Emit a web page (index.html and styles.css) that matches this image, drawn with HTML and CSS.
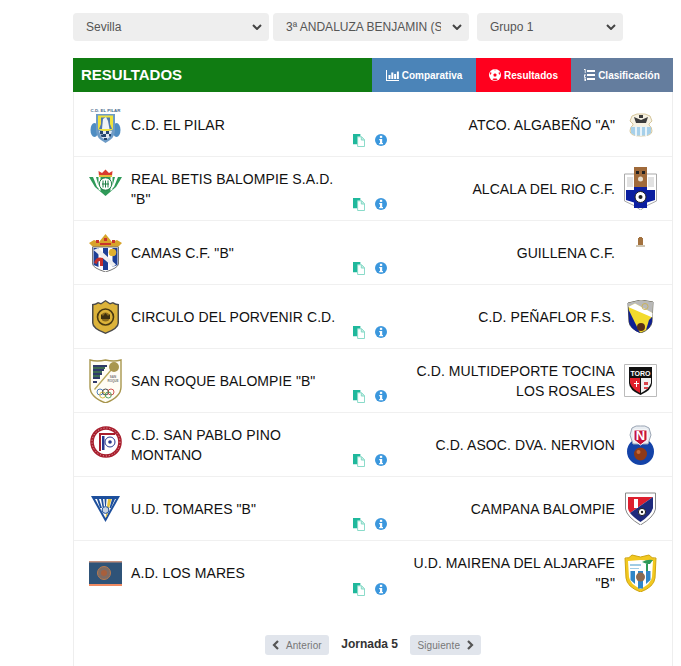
FILE: index.html
```html
<!DOCTYPE html>
<html lang="en">
  <head>
    <meta charset="UTF-8" />
    <meta name="viewport" content="width=device-width, initial-scale=1.0" />
    <title>Resultados</title>
    <link rel="stylesheet" href="styles.css">
  </head>
  <body>
    <svg class="defs" width="0" height="0">
      <symbol id="ico-copy" viewBox="0 0 13 14">
        <path d="M0 0H8V3H5V11H0Z" fill="#1fb89c" />
        <path d="M5 3H9.5L12.5 6V13.5H5Z" fill="#fff" stroke="#7fd8c4" />
        <path d="M9 3V6.5H12.5" fill="#bfeadf" stroke="#7fd8c4" />
      </symbol>
      <symbol id="ico-info" viewBox="0 0 12 12">
        <circle cx="6" cy="6" r="6" fill="#3b97dd" />
        <rect x="4.9" y="1.8" width="2.3" height="2.1" fill="#fff" />
        <path d="M4.2 5H7.2V8.9H8V10.2H4.2V8.9H5V6.3H4.2Z" fill="#fff" />
      </symbol>
    </svg>

    <div class="page">
      <div class="filters">
        <select class="filter filter-wide"><option>Sevilla</option></select>
        <select class="filter filter-wide"><option>3ª ANDALUZA BENJAMIN (SEVILLA)</option></select>
        <select class="filter filter-small"><option>Grupo 1</option></select>
      </div>

      <div class="head">
        <div class="head-title">RESULTADOS</div>
        <a class="tab tab-blue" href="#">
          <svg width="13" height="11" viewBox="0 0 13 11"><path d="M0 0H1V10H13V11H0Z M2.5 5H4.5V9H2.5Z M5.3 2.5H7.3V9H5.3Z M8.1 4H10.1V9H8.1Z M10.9 1.5H12.9V9H10.9Z" fill="#fff" /></svg>
          Comparativa
        </a>
        <a class="tab tab-red" href="#">
          <svg width="12" height="12" viewBox="0 0 12 12"><circle cx="6" cy="6" r="6" fill="#fff" /><path d="M6 4.2L7.7 5.4L7.1 7.4H4.9L4.3 5.4Z M4.8 .7H7.2L6 1.5Z M1 3.6L2.2 3.3L2.3 4.8L1.2 6Z M11 3.6L9.8 3.3L9.7 4.8L10.8 6Z M3.4 10.2L4.6 9.6H7.4L8.6 10.2L7 11.2H5Z" fill="#ff001e" /></svg>
          Resultados
        </a>
        <a class="tab tab-slate" href="#">
          <svg width="11" height="12" viewBox="0 0 11 12"><path d="M0 0H1.6V4H.8V1H0Z M0 5.6H2V6.4H.9V8H2V8.8H0Z M0 9.6H2V12H0V11.4H1.2V11H.4V10.4H1.2V10.2H0Z M3 1H11V3H3Z M3 5H11V7H3Z M3 9H11V11H3Z" fill="#fff" /></svg>
          Clasificación
        </a>
      </div>

      <div class="card">
        <div class="match">
          <div class="team">
            <div class="crest-slot">
              <svg width="33" height="36" viewBox="0 0 33 36">
                <text x="16.5" y="5" class="crest-tiny" fill="#47698c" text-anchor="middle">C.D. EL PILAR</text>
                <ellipse cx="5.5" cy="23" rx="4" ry="7" fill="#4f8dc2" />
                <ellipse cx="27.5" cy="23" rx="4" ry="7" fill="#4f8dc2" />
                <path d="M7 7H26V24Q26 31 16.5 36Q7 31 7 24Z" fill="#6d9bc6" />
                <path d="M9 8.5H24V22Q22 24 16.5 24Q11 24 9 22Z" fill="#efe23c" />
                <path d="M12 10.5H21V17L23 22H10L12 17Z" fill="#4f78ad" />
                <path d="M14 12L17 10L19 14L20.5 22H13Z" fill="#eef3f7" />
                <path d="M10 24H23L21 30L16.5 33L12 30Z" fill="#dfe8f0" />
                <path d="M11 24H14V27H11Z M17 24H20V27H17Z M14 27H17V30H14Z M20 27H22V29.5H20Z M11.5 27.5H14V30H12.5Z M15 31H18V33H15Z" fill="#24466f" />
              </svg>
            </div>
            <span class="team-name">C.D. EL PILAR</span>
          </div>
          <div class="actions"><svg class="ico-copy" width="12" height="13"><use href="#ico-copy" /></svg><svg class="ico-info" width="12" height="12"><use href="#ico-info" /></svg></div>
          <div class="team team-away">
            <span class="team-name">ATCO. ALGABEÑO "A"</span>
            <div class="crest-slot">
              <svg width="24" height="24" viewBox="0 0 24 24">
                <path d="M3 3L8 1H16L21 3L23 8L20 11V12Q23 14 23 18Q23 23 12 23Q1 23 1 18Q1 14 4 12V11L1 8Z" fill="#f6f1e2" stroke="#d6c79c" />
                <path d="M5 4L12 7L19 4L17 10H7Z M10 2H14V5H10Z" fill="#3c3c3c" />
                <path d="M2 14H22V20L18 22.5H6L2 20Z" fill="#a6d0ea" />
                <path d="M6 13H8V23H6Z M11 13H13V23H11Z M16 13H18V23H16Z" fill="#e8f3f9" />
              </svg>
            </div>
          </div>
        </div>

        <div class="match">
          <div class="team">
            <div class="crest-slot crest-up-lg">
              <svg width="33" height="27" viewBox="0 0 33 27">
                <path d="M10 7L9.5 2L13 4L16.5 0.5L20 4L23.5 2L23 7Z" fill="#d8392f" />
                <path d="M10 6H23V8H10Z" fill="#e3bd3c" />
                <path d="M0 8H33L27 18L16.5 27L6 18Z" fill="#2f9a58" />
                <path d="M4 8H7L10.5 20L8 18Z M9.5 8H11.5V22L9.5 20.5Z M21.5 8H23.5V20.5L21.5 22Z M26 8H29L25 18L22.5 20Z" fill="#fff" />
                <circle cx="16.5" cy="15" r="6.2" fill="#fff" stroke="#1d7c43" />
                <path d="M14 11.5V18.5M16.5 11.5V18.5M19 11.5V18.5M13 15H20" stroke="#1d7c43" />
              </svg>
            </div>
            <span class="team-name">REAL BETIS BALOMPIE S.A.D. "B"</span>
          </div>
          <div class="actions"><svg class="ico-copy" width="12" height="13"><use href="#ico-copy" /></svg><svg class="ico-info" width="12" height="12"><use href="#ico-info" /></svg></div>
          <div class="team team-away">
            <span class="team-name">ALCALA DEL RIO C.F.</span>
            <div class="crest-slot">
              <svg width="33" height="43" viewBox="0 0 33 43">
                <path d="M.5 7H32.5V34L22 39L16.5 43L11 39L.5 34Z" fill="#fff" stroke="#a9a9a9" />
                <path d="M10 0H23V20H10Z" fill="#a06a3a" />
                <path d="M12 4H15V7H12Z M18 4H21V7H18Z" fill="#222" />
                <circle cx="16.5" cy="12" r="2.5" fill="#e8e0d0" />
                <path d="M2 23H10V35.5L2 33Z M23 23H31V33L23 35.5Z M10 20H23V41H10Z" fill="#0b1fa0" />
                <circle cx="16.5" cy="30" r="5.5" fill="#fff" stroke="#222" />
                <circle cx="16.5" cy="30" r="2" fill="#222" />
                <path d="M3 10H9V20H3Z M24 10H30V20H24Z" fill="#e2e2e2" />
              </svg>
            </div>
          </div>
        </div>

        <div class="match">
          <div class="team">
            <div class="crest-slot">
              <svg width="33" height="39" viewBox="0 0 33 39">
                <path d="M0 10L5 7L10 9L16.5 1L23 9L28 7L33 10L29 14H4Z" fill="#d8a32a" />
                <path d="M7 7H10V10H7Z M23 7H26V10H23Z M15 5H18V8H15Z M11 10H22V12H11Z" fill="#c9342c" />
                <path d="M3.5 14H29.5V31Q29 35 16.5 39Q4 35 3.5 31Z" fill="#fff" stroke="#777" />
                <path d="M4.5 15H9.5V34L4.5 32Z M14 15H19V37H14Z M23.5 15H28.5V32L23.5 34Z" fill="#1d3f95" />
                <path d="M4.5 17L24 34L27 31.5L9 15Z" fill="#eee" />
                <circle cx="23.5" cy="19.5" r="3.8" fill="#e0b030" />
                <path d="M5 30Q7 23 14 25V33H11V28Q8 28 8 31Z" fill="#c4302b" />
              </svg>
            </div>
            <span class="team-name">CAMAS C.F. "B"</span>
          </div>
          <div class="actions"><svg class="ico-copy" width="12" height="13"><use href="#ico-copy" /></svg><svg class="ico-info" width="12" height="12"><use href="#ico-info" /></svg></div>
          <div class="team team-away">
            <span class="team-name">GUILLENA C.F.</span>
            <div class="crest-slot crest-up-xl">
              <svg width="9" height="10" viewBox="0 0 9 10">
                <path d="M3 0H6V1H7V8H2V1H3Z" fill="#a3723f" />
                <path d="M0 8H9V10H0Z" fill="#cfc6b4" />
              </svg>
            </div>
          </div>
        </div>

        <div class="match">
          <div class="team">
            <div class="crest-slot">
              <svg width="29" height="35" viewBox="0 0 29 35">
                <path d="M1 5Q4 5 7 3L10 4L14.5 1L19 4L22 3Q25 5 28 5V24Q28 30 14.5 35Q1 30 1 24Z" fill="#4a4a4a" />
                <path d="M2.5 6.2Q5 6.2 7.2 4.5L10 5.5L14.5 2.6L19 5.5L21.8 4.5Q24 6.2 26.5 6.2V24Q26.5 29 14.5 33.5Q2.5 29 2.5 24Z" fill="#dcb33a" />
                <circle cx="14.5" cy="18" r="8" fill="none" stroke="#4a3a12" stroke-width="1.6" />
                <circle cx="14.5" cy="18" r="4.5" fill="#8a6a1c" />
                <path d="M10 15L12 17L14.5 14L17 17L19 15V20H10Z" fill="#3d3010" />
              </svg>
            </div>
            <span class="team-name">CIRCULO DEL PORVENIR C.D.</span>
          </div>
          <div class="actions"><svg class="ico-copy" width="12" height="13"><use href="#ico-copy" /></svg><svg class="ico-info" width="12" height="12"><use href="#ico-info" /></svg></div>
          <div class="team team-away">
            <span class="team-name">C.D. PEÑAFLOR F.S.</span>
            <div class="crest-slot">
              <svg width="27" height="33" viewBox="0 0 27 33">
                <path d="M1 3L14 0L26 2L25 22Q24 29 14 33Q3 29 2 22Z" fill="#f3db2c" stroke="#333" stroke-width=".8" />
                <path d="M1 3L14 0L26 2L25.6 13L8 3.5L1.2 7Z" fill="#b9b9b9" />
                <path d="M1.2 7L8 3.5L25.6 13L25.4 17.5Z" fill="#fff" />
                <path d="M1.3 9L13 33Q3 29 2 22Z" fill="#0f1f92" />
                <path d="M25 17L25 22Q24 27 19 30L22 20Z" fill="#0f1f92" />
                <circle cx="14" cy="27" r="4" fill="#5a3016" />
                <circle cx="18" cy="6.5" r="3" fill="none" stroke="#c9b25c" />
              </svg>
            </div>
          </div>
        </div>

        <div class="match">
          <div class="team">
            <div class="crest-slot">
              <svg width="33" height="44" viewBox="0 0 33 44">
                <path d="M1 1Q8 3 16.5 1Q25 3 32 1V28Q32 38 16.5 44Q1 38 1 28Z" fill="#fffdf4" stroke="#a8964e" stroke-width="1.4" />
                <path d="M4 6H18V8H4Z M4 10H15V12H4Z M4 14H13V16H4Z M4 18H11V20H4Z M4 22H8V24H4Z" fill="#2f3a6a" />
                <path d="M4 8H16V10H4Z M4 12H13V14H4Z M4 16H11V18H4Z" fill="#3d6a52" />
                <path d="M5 30L22 10L23 11L6 31Z" fill="#b7a75a" />
                <circle cx="25" cy="8" r="5" fill="#a8964e" />
                <text x="24" y="19" class="crest-micro" fill="#777" text-anchor="middle">SAN</text>
                <text x="24" y="23" class="crest-micro" fill="#777" text-anchor="middle">ROQUE</text>
                <g fill="none" stroke-width=".9"><circle cx="11" cy="33" r="3" stroke="#3c73b8" /><circle cx="16.5" cy="33" r="3" stroke="#333" /><circle cx="22" cy="33" r="3" stroke="#c9423c" /><circle cx="13.7" cy="36" r="3" stroke="#d3b338" /><circle cx="19.3" cy="36" r="3" stroke="#3f9a58" /></g>
              </svg>
            </div>
            <span class="team-name">SAN ROQUE BALOMPIE "B"</span>
          </div>
          <div class="actions"><svg class="ico-copy" width="12" height="13"><use href="#ico-copy" /></svg><svg class="ico-info" width="12" height="12"><use href="#ico-info" /></svg></div>
          <div class="team team-away">
            <span class="team-name">C.D. MULTIDEPORTE TOCINA LOS ROSALES</span>
            <div class="crest-slot">
              <svg width="33" height="33" viewBox="0 0 33 33">
                <path d="M.5 .5H32.5V32.5H.5Z" fill="#fff" stroke="#bbb" />
                <path d="M5 3H28V19Q28 26 16.5 31Q5 26 5 19Z" fill="#111" />
                <path d="M6 14H16V29Q8 25 6 19Z" fill="#e2202c" />
                <path d="M17 14H27V19Q25 25 17 29Z" fill="#f0f0f0" />
                <path d="M10 19H12V17H13V19H15V20H13V23H12V20H10Z" fill="#fff" />
                <path d="M20 18H24V21H20Z M20 23H24V25H20Z" fill="#d8454c" />
                <text x="16.5" y="12" class="crest-toro" fill="#fff" text-anchor="middle">TORO</text>
              </svg>
            </div>
          </div>
        </div>

        <div class="match">
          <div class="team">
            <div class="crest-slot crest-up-sm">
              <svg width="32" height="32" viewBox="0 0 32 32">
                <circle cx="16" cy="16" r="14" fill="#fff" stroke="#a81e2d" stroke-width="3.6" />
                <circle cx="16" cy="16" r="14" fill="none" stroke="#f3d5d5" stroke-width=".8" stroke-dasharray="1 2" />
                <path d="M9 7H25V9H11V25H9Z" fill="#a81e2d" />
                <path d="M12 10H14.5V24H12Z" fill="#27378f" />
                <circle cx="20" cy="16" r="5" fill="#fff" stroke="#27378f" />
                <circle cx="20" cy="16" r="1.8" fill="#27378f" />
              </svg>
            </div>
            <span class="team-name">C.D. SAN PABLO PINO MONTANO</span>
          </div>
          <div class="actions"><svg class="ico-copy" width="12" height="13"><use href="#ico-copy" /></svg><svg class="ico-info" width="12" height="12"><use href="#ico-info" /></svg></div>
          <div class="team team-away">
            <span class="team-name">C.D. ASOC. DVA. NERVION</span>
            <div class="crest-slot">
              <svg width="27" height="40" viewBox="0 0 27 40">
                <circle cx="13.5" cy="26.5" r="13.5" fill="#1443a8" />
                <path d="M5 3Q9 0 13.5 1Q18 0 22 3L24 10L21 19H6L3 10Z" fill="#e9edf2" stroke="#9aa5b4" />
                <path d="M7 5H20V15L13.5 20L7 15Z" fill="#c5123a" stroke="#fff" />
                <text x="13.5" y="15" class="crest-letter" fill="#fff" text-anchor="middle">N</text>
                <circle cx="13.5" cy="29" r="6.5" fill="#8f3a17" />
                <circle cx="11.5" cy="27" r="2" fill="#c46a3a" />
              </svg>
            </div>
          </div>
        </div>

        <div class="match">
          <div class="team">
            <div class="crest-slot">
              <svg width="29" height="26" viewBox="0 0 29 26">
                <path d="M0 0H29L14.5 26Z" fill="#1d4f9c" />
                <path d="M4 3H25L14.5 22Z" fill="#fff" />
                <path d="M6 3H8L11 12H9Z M10 3H12L13 11H11.5Z M13.5 3H15.5L15 10H14Z M21 3H24L20 12H18.5Z" fill="#1d4f9c" />
                <path d="M17 3H20.5L16 20L14.5 22Z" fill="#e3c23f" />
                <circle cx="14.5" cy="14" r="3.4" fill="#c8d4e4" stroke="#1d4f9c" />
              </svg>
            </div>
            <span class="team-name">U.D. TOMARES "B"</span>
          </div>
          <div class="actions"><svg class="ico-copy" width="12" height="13"><use href="#ico-copy" /></svg><svg class="ico-info" width="12" height="12"><use href="#ico-info" /></svg></div>
          <div class="team team-away">
            <span class="team-name">CAMPANA BALOMPIE</span>
            <div class="crest-slot">
              <svg width="31" height="33" viewBox="0 0 31 33">
                <path d="M.5 1H30.5V17Q29 25 15.5 33Q2 25 .5 17Z" fill="#fff" stroke="#888" />
                <path d="M3 5H28L5 21Q3 18 3 16Z" fill="#dd1f2e" />
                <path d="M28 5V16Q26 23 15.5 30Q8 25 5 21Z" fill="#1e2a7c" />
                <path d="M9 7H13V16H9Z" fill="#fff" />
                <circle cx="17" cy="20" r="3.6" fill="#fff" stroke="#222" />
                <circle cx="17" cy="20" r="1.2" fill="#222" />
              </svg>
            </div>
          </div>
        </div>

        <div class="match match-last">
          <div class="team">
            <div class="crest-slot">
              <svg width="33" height="25" viewBox="0 0 33 25">
                <path d="M0 0H33V25H0Z" fill="#2f5378" />
                <path d="M0 0H33V1.5H0Z" fill="#c4917f" />
                <path d="M0 23H33V25H0Z" fill="#f08a62" />
                <circle cx="15" cy="12" r="6.5" fill="#7f6b63" stroke="#b77a4f" />
                <circle cx="15" cy="12" r="3" fill="#a85f3c" />
              </svg>
            </div>
            <span class="team-name">A.D. LOS MARES</span>
          </div>
          <div class="actions"><svg class="ico-copy" width="12" height="13"><use href="#ico-copy" /></svg><svg class="ico-info" width="12" height="12"><use href="#ico-info" /></svg></div>
          <div class="team team-away">
            <span class="team-name">U.D. MAIRENA DEL ALJARAFE "B"</span>
            <div class="crest-slot">
              <svg width="33" height="38" viewBox="0 0 33 38">
                <path d="M1 4Q5 5 8 1L16.5 3L25 1Q28 5 32 4L31 24Q30 33 16.5 38Q3 33 2 24Z" fill="#f2c81f" stroke="#cfa510" />
                <path d="M4 7L16.5 6L29 7L28 23Q27 30 16.5 35Q6 30 5 23Z" fill="#fff" />
                <path d="M6.5 17H11V30L6.5 26Z M14 17H19V34.5H14Z M22 17H26.5V26L22 30Z" fill="#2f86c9" />
                <path d="M18 8Q23 5 29 6L26 10H23Z M22 10H24V17H22Z" fill="#2e9a58" />
                <path d="M6 10H17V12H6Z M6 14H15V15H6Z" fill="#9fcbe4" />
                <circle cx="16.5" cy="23" r="4.5" fill="#8c6a50" />
              </svg>
            </div>
          </div>
        </div>

        <div class="pager">
          <a class="pager-btn" href="#"><svg width="8" height="10" viewBox="0 0 8 10"><path d="M6 1L2 5L6 9" fill="none" stroke="#555" stroke-width="2.2" /></svg> Anterior</a>
          <span class="pager-label">Jornada 5</span>
          <a class="pager-btn" href="#">Siguiente <svg width="8" height="10" viewBox="0 0 8 10"><path d="M2 1L6 5L2 9" fill="none" stroke="#555" stroke-width="2.2" /></svg></a>
        </div>
      </div>
    </div>
  </body>
</html>
```

FILE: styles.css
```css
* {
  margin: 0;
  padding: 0;
  box-sizing: border-box;
  font-family: "Liberation Sans", Arial, sans-serif;
}

body {
  background: #fff;
  color: #111;
}

.defs {
  display: block;
  height: 0;
}

.page {
  width: 600px;
  margin-left: 73px;
  padding-top: 13px;
}

/* filtros */
.filters {
  display: flex;
  gap: 4px;
}

.filter {
  height: 28px;
  border: 0;
  border-radius: 4px;
  padding: 0 28px 0 13px;
  font-size: 12px;
  color: #555;
  appearance: none;
  background-color: #eee;
  background-image: url("data:image/svg+xml,%3Csvg xmlns='http://www.w3.org/2000/svg' width='10' height='6'%3E%3Cpath d='M1 1L5 5L9 1' fill='none' stroke='%23444' stroke-width='2'/%3E%3C/svg%3E");
  background-repeat: no-repeat;
  background-position: right 7px center;
}

.filter-wide {
  width: 196px;
}

.filter-small {
  width: 146px;
  margin-left: 4px;
}

/* cabecera */
.head {
  display: flex;
  height: 34px;
  margin-top: 17px;
  color: #fff;
}

.head-title {
  flex: 1;
  background: #107c12;
  padding-left: 8px;
  font-size: 15px;
  font-weight: bold;
  line-height: 34px;
}

.tab {
  display: flex;
  align-items: center;
  justify-content: center;
  gap: 3px;
  color: #fff;
  font-size: 10px;
  font-weight: bold;
  text-decoration: none;
}

.tab-blue {
  width: 104px;
  background: #4b84b8;
}

.tab-red {
  width: 95px;
  background: #ff001e;
}

.tab-slate {
  width: 102px;
  background: #647d9e;
}

/* partidos */
.card {
  padding-top: 1px;
  border-left: 1px solid #eee;
  border-right: 1px solid #eee;
}

.match {
  display: flex;
  align-items: center;
  height: 64px;
  padding: 0 15px;
  border-bottom: 1px solid #f0f0f0;
}

.match-last {
  border-bottom: 0;
}

.team {
  display: flex;
  align-items: center;
  gap: 9px;
  width: 264px;
}

.team-away {
  flex: 1;
  width: auto;
  justify-content: flex-end;
  text-align: right;
}

.team-name {
  width: 212px;
  font-size: 14px;
  line-height: 20px;
  letter-spacing: 0.08px;
}

.crest-slot {
  display: flex;
  justify-content: center;
  flex: 0 0 33px;
}

.crest-up-sm {
  margin-bottom: 6px;
}

.crest-up-lg {
  margin-bottom: 13px;
}

.crest-up-xl {
  margin-bottom: 22px;
}

.crest-tiny {
  font-size: 4.4px;
  font-weight: bold;
}

.crest-micro {
  font-size: 3px;
  font-weight: bold;
}

.crest-toro {
  font-size: 7px;
  font-weight: bold;
}

.crest-letter {
  font-size: 13px;
  font-weight: bold;
}

.actions {
  display: flex;
  align-items: flex-end;
  gap: 10px;
  align-self: flex-end;
  padding-bottom: 9px;
}

.ico-info {
  margin-bottom: 1px;
}

/* paginacion */
.pager {
  display: flex;
  justify-content: center;
  align-items: center;
  gap: 12.5px;
  padding: 30px 0 12px;
}

.pager-btn {
  display: flex;
  align-items: center;
  gap: 6px;
  height: 20px;
  padding: 0 7px;
  border-radius: 3px;
  background: #e1e5ec;
  color: #777;
  font-size: 10px;
  letter-spacing: 0.1px;
  text-decoration: none;
}

.pager-label {
  font-size: 12px;
  font-weight: bold;
  color: #333;
  margin-bottom: 2px;
}
```
